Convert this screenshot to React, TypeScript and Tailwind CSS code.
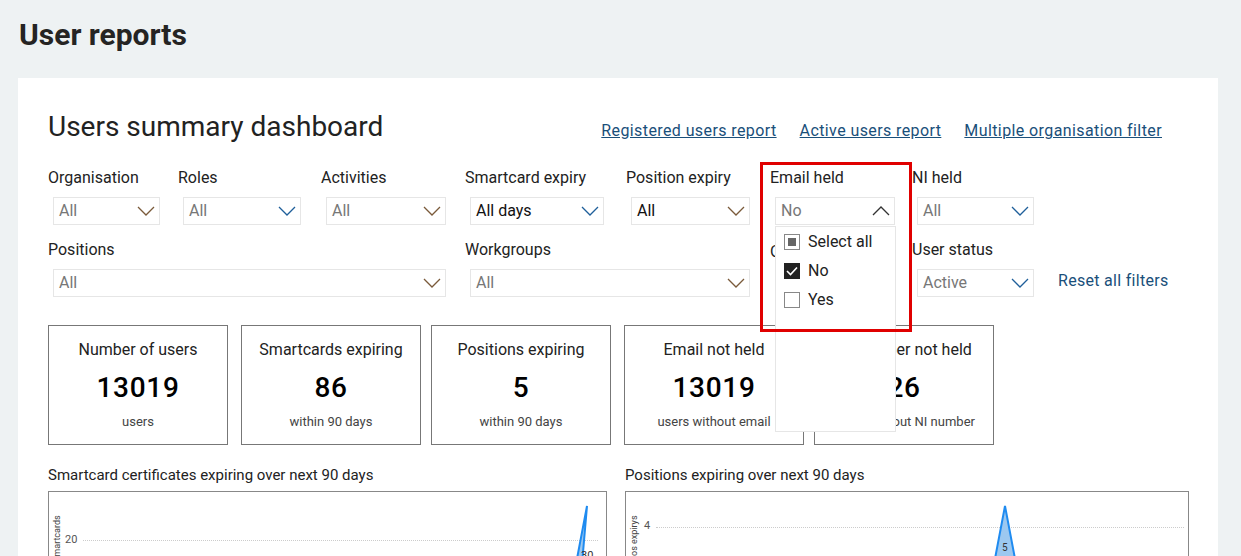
import React from "react";

const font = { fontFamily: "Roboto, 'Liberation Sans', sans-serif" };

function Chevron({ up = false }: { up?: boolean }) {
  return (
    <svg width="18" height="10" viewBox="0 0 18 10" className="shrink-0">
      <path d={up ? "M1 9 L9 1 L17 9" : "M1 1 L9 9 L17 1"} fill="none" stroke={up ? "#333" : "#7a5a3a"} strokeWidth="1.3" />
    </svg>
  );
}

function Select({ value, w, dark = false, blueChev = false, up = false }: { value: string; w: string; dark?: boolean; blueChev?: boolean; up?: boolean }) {
  return (
    <div className={`ml-[5px] mt-[9px] flex h-[28px] items-center justify-between border border-[#e6e6e6] pl-[5px] pr-[4px] ${w}`}>
      <span className={`text-[16px] ${dark ? "text-[#111]" : "text-[#777]"}`}>{value}</span>
      {blueChev ? (
        <svg width="18" height="10" viewBox="0 0 18 10"><path d="M1 1 L9 9 L17 1" fill="none" stroke="#1f5f9a" strokeWidth="1.3" /></svg>
      ) : (
        <Chevron up={up} />
      )}
    </div>
  );
}

function Filter({ label, value, col, sel, dark, blue, up }: { label: string; value: string; col: string; sel: string; dark?: boolean; blue?: boolean; up?: boolean }) {
  return (
    <div className={`shrink-0 ${col}`}>
      <div className="text-[16px] leading-[20px] text-[#222]">{label}</div>
      <Select value={value} w={sel} dark={dark} blueChev={blue} up={up} />
    </div>
  );
}

function Card({ title, num, sub, w }: { title: string; num: string; sub: string; w: string }) {
  return (
    <div className={`flex h-[120px] shrink-0 flex-col items-center border border-[#777] pt-[12px] ${w}`}>
      <div className="text-[16px] text-[#222]">{title}</div>
      <div className="mt-[10px] text-[28px] font-medium leading-[32px] tracking-wide text-black">{num}</div>
      <div className="mt-[8px] text-[13px] text-[#444]">{sub}</div>
    </div>
  );
}

export default function App() {
  return (
    <div className="min-h-[556px] w-[1241px] overflow-hidden bg-[#eef2f3]" style={font}>
      <h1 className="px-[19px] pt-[15px] text-[30px] font-bold leading-[40px] text-[#252423]">User reports</h1>
      <div className="relative ml-[18px] mt-[23px] h-[500px] w-[1200px] bg-white pl-[30px] pt-[28px]">
        <div className="flex items-baseline">
          <div className="text-[28px] text-[#222]">Users summary dashboard</div>
          <div className="ml-auto mr-[56px] flex gap-[23px] text-[16px] tracking-[0.4px] text-[#1a4f7a] underline">
            <span>Registered users report</span>
            <span>Active users report</span>
            <span>Multiple organisation filter</span>
          </div>
        </div>
        <div className="mt-[20px] flex">
          <Filter label="Organisation" value="All" col="w-[130px]" sel="w-[107px]" />
          <Filter label="Roles" value="All" col="w-[143px]" sel="w-[118px]" blue />
          <Filter label="Activities" value="All" col="w-[144px]" sel="w-[120px]" />
          <Filter label="Smartcard expiry" value="All days" col="w-[161px]" sel="w-[134px]" dark blue />
          <Filter label="Position expiry" value="All" col="w-[144px]" sel="w-[119px]" dark />
          <Filter label="Email held" value="No" col="w-[142px]" sel="w-[120px]" up />
          <Filter label="NI held" value="All" col="w-[130px]" sel="w-[117px]" blue />
        </div>
        <div className="mt-[15px] flex">
          <Filter label="Positions" value="All" col="w-[417px]" sel="w-[393px]" />
          <Filter label="Workgroups" value="All" col="w-[305px]" sel="w-[280px]" />
          <div className="w-[142px] shrink-0 text-[16px] text-[#222]">O</div>
          <Filter label="User status" value="Active" col="w-[146px]" sel="w-[117px]" blue />
          <div className="self-end pb-[4px] text-[16px] tracking-[0.3px] text-[#1a4f7a]">Reset all filters</div>
        </div>
        <div className="mt-[28px] flex">
          <Card title="Number of users" num="13019" sub="users" w="w-[180px] mr-[13px]" />
          <Card title="Smartcards expiring" num="86" sub="within 90 days" w="w-[180px] mr-[10px]" />
          <Card title="Positions expiring" num="5" sub="within 90 days" w="w-[180px] mr-[13px]" />
          <Card title="Email not held" num="13019" sub="users without email" w="w-[180px] mr-[10px]" />
          <Card title="NI number not held" num="26" sub="users without NI number" w="w-[180px]" />
        </div>
        <div className="mt-[19px] flex gap-[18px]">
          <div className="w-[559px]">
            <div className="text-[15px] text-[#222]">Smartcard certificates expiring over next 90 days</div>
            <div className="relative mt-[4px] h-[80px] border border-[#888]">
              <span className="absolute left-[2px] top-[70px] origin-top-left -rotate-90 text-[9px] text-[#444]">Smartcards</span>
              <span className="absolute left-[16px] top-[40px] text-[11px] text-[#555]">20</span>
              <div className="absolute left-[34px] right-[8px] top-[48px] border-t border-dotted border-[#ccc]" />
              <svg className="absolute left-[525px] top-[12px]" width="20" height="60"><path d="M2 60 L13 2 L8 60 Z" fill="#9cc8f0" stroke="#1f8bf0" strokeWidth="2" /></svg>
              <span className="absolute left-[532px] top-[56px] text-[11px] text-[#333]">30</span>
            </div>
          </div>
          <div className="w-[564px]">
            <div className="text-[15px] text-[#222]">Positions expiring over next 90 days</div>
            <div className="relative mt-[4px] h-[80px] border border-[#888]">
              <span className="absolute left-[2px] top-[64px] origin-top-left -rotate-90 text-[9px] text-[#444]">os expirys</span>
              <span className="absolute left-[18px] top-[26px] text-[11px] text-[#555]">4</span>
              <div className="absolute left-[30px] right-[4px] top-[35px] border-t border-dotted border-[#ccc]" />
              <svg className="absolute left-[366px] top-[12px]" width="30" height="60"><path d="M2 60 L13 2 L24 60 Z" fill="#9cc8f0" stroke="#1f8bf0" strokeWidth="2" /></svg>
              <span className="absolute left-[376px] top-[48px] text-[10px] text-[#333]">5</span>
            </div>
          </div>
        </div>

        {/* open dropdown for Email held */}
        <div className="absolute left-[757px] top-[148px] h-[206px] w-[121px] border border-[#e6e6e6] bg-white pl-[8px] pt-[0px]">
          {[
            { t: "Select all", s: "partial" },
            { t: "No", s: "on" },
            { t: "Yes", s: "off" },
          ].map((o) => (
            <div key={o.t} className="flex h-[29px] items-center gap-[8px] text-[16px] text-[#222]">
              <span className={`flex h-[16px] w-[16px] items-center justify-center border ${o.s === "on" ? "border-[#222] bg-[#222]" : "border-[#888] bg-white"}`}>
                {o.s === "partial" && <span className="h-[8px] w-[8px] bg-[#666]" />}
                {o.s === "on" && (
                  <svg width="12" height="10" viewBox="0 0 12 10"><path d="M1 5 L4.5 8.5 L11 1.5" fill="none" stroke="white" strokeWidth="1.6" /></svg>
                )}
              </span>
              {o.t}
            </div>
          ))}
        </div>
        <div className="pointer-events-none absolute left-[742px] top-[84px] h-[170px] w-[152px] border-[3px] border-[#e00000]" />
      </div>
    </div>
  );
}
